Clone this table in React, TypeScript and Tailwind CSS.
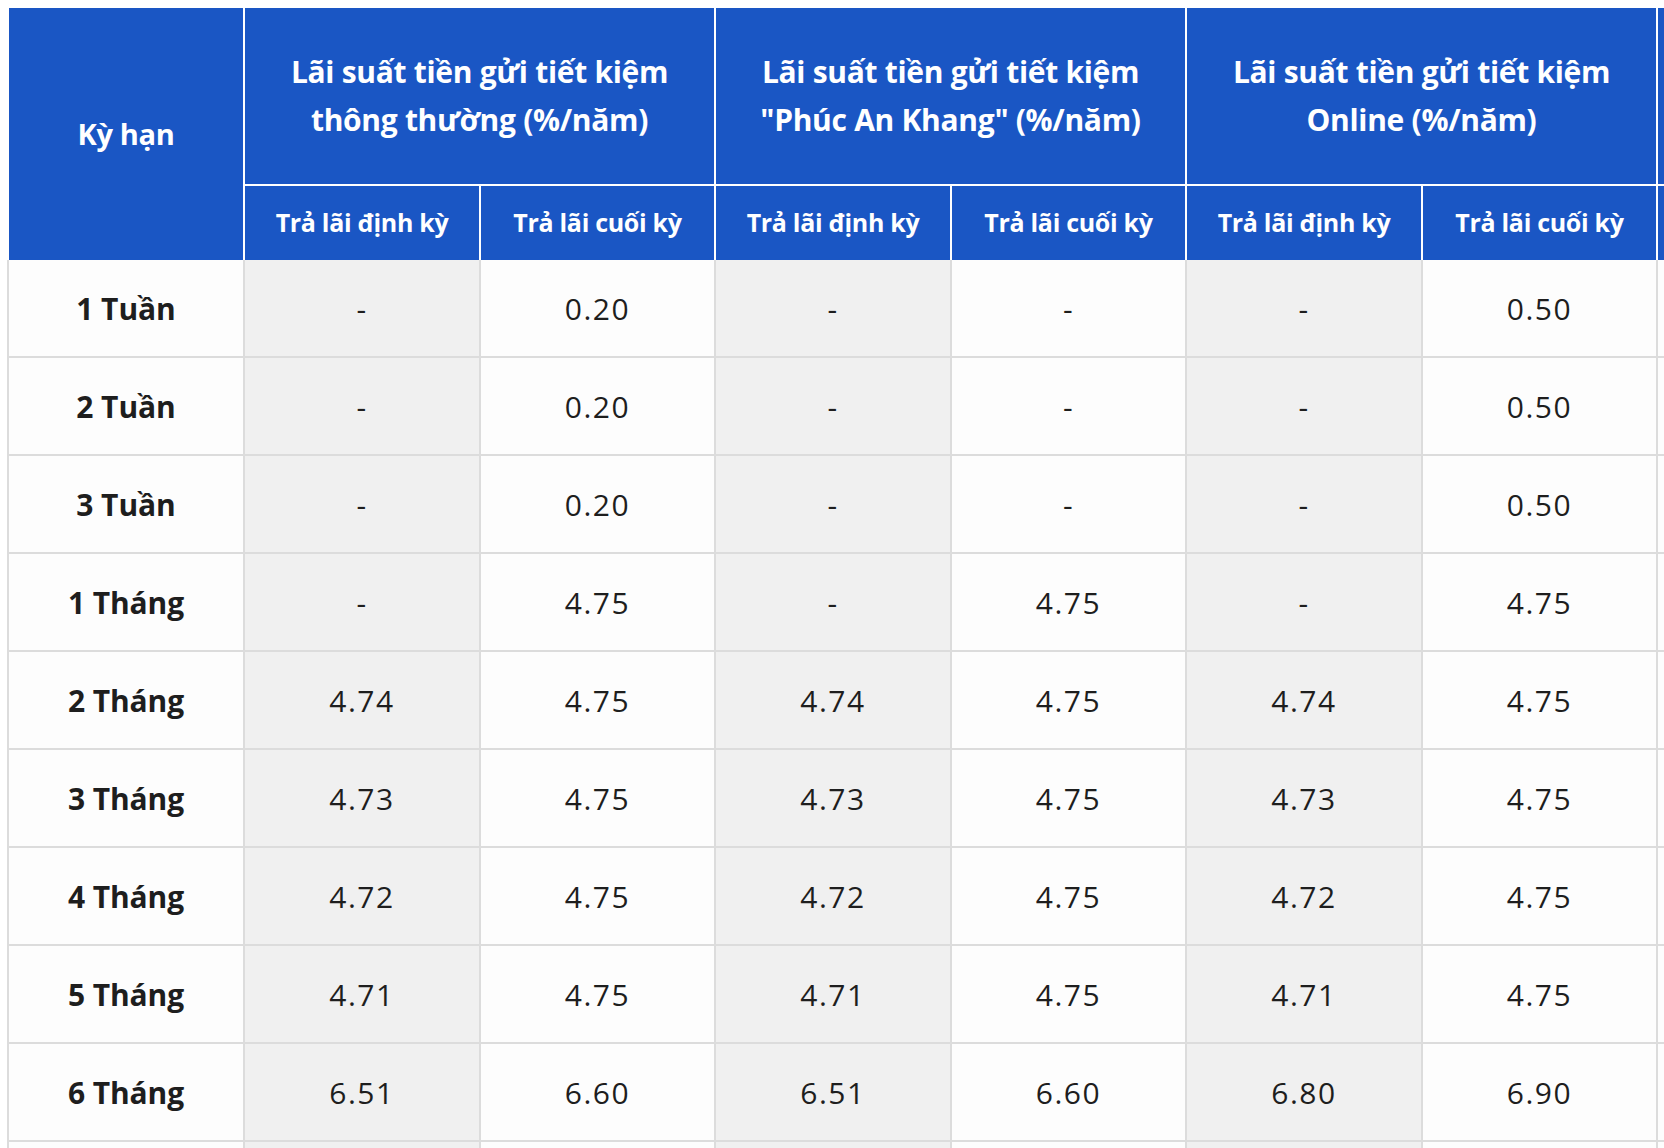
import React from "react";

const rows: string[][] = [
  ["1 Tuần", "-", "0.20", "-", "-", "-", "0.50"],
  ["2 Tuần", "-", "0.20", "-", "-", "-", "0.50"],
  ["3 Tuần", "-", "0.20", "-", "-", "-", "0.50"],
  ["1 Tháng", "-", "4.75", "-", "4.75", "-", "4.75"],
  ["2 Tháng", "4.74", "4.75", "4.74", "4.75", "4.74", "4.75"],
  ["3 Tháng", "4.73", "4.75", "4.73", "4.75", "4.73", "4.75"],
  ["4 Tháng", "4.72", "4.75", "4.72", "4.75", "4.72", "4.75"],
  ["5 Tháng", "4.71", "4.75", "4.71", "4.75", "4.71", "4.75"],
  ["6 Tháng", "6.51", "6.60", "6.51", "6.60", "6.80", "6.90"],
  ["", "", "", "", "", "", ""],
];

const groups: [string, string][] = [
  ["Lãi suất tiền gửi tiết kiệm", "thông thường (%/năm)"],
  ["Lãi suất tiền gửi tiết kiệm", "\"Phúc An Khang\" (%/năm)"],
  ["Lãi suất tiền gửi tiết kiệm", "Online (%/năm)"],
];

const font = { fontFamily: "'Open Sans', 'Noto Sans', sans-serif" };

export default function App() {
  return (
    <div className="w-[1664px] h-[1148px] overflow-hidden bg-white pl-[7px] pt-[8px]" style={font}>
      <div className="grid w-max grid-cols-[238px_236px_235px_236px_235px_236px_235px_236px] grid-rows-[178px_74px_repeat(10,98px)]">
        {/* Header */}
        <div className="row-span-2 flex items-center justify-center border-l-2 border-r-2 border-white bg-[#1a56c4] text-[29px] font-bold tracking-[-0.3px] text-white">
          Kỳ hạn
        </div>
        {groups.map((g, i) => (
          <div
            key={i}
            className="col-span-2 flex flex-col items-center justify-center border-r-2 border-b-2 border-white bg-[#1a56c4] text-[30px] font-bold leading-[48px] tracking-[-0.3px] text-white"
          >
            <span>{g[0]}</span>
            <span>{g[1]}</span>
          </div>
        ))}
        <div className="border-b-2 border-white bg-[#1a56c4]" />
        {[0, 1, 2].map((i) => (
          <React.Fragment key={i}>
            <div className="flex items-center justify-center border-r-2 border-white bg-[#1a56c4] text-[25px] font-bold tracking-[-0.3px] text-white">
              Trả lãi định kỳ
            </div>
            <div className="flex items-center justify-center border-r-2 border-white bg-[#1a56c4] text-[25px] font-bold tracking-[-0.3px] text-white">
              Trả lãi cuối kỳ
            </div>
          </React.Fragment>
        ))}
        <div className="bg-[#1a56c4]" />
        {/* Body */}
        {rows.map((r, ri) => (
          <React.Fragment key={ri}>
            <div className="flex items-center justify-center border-l-2 border-r-2 border-b-2 border-[#dcdcdc] bg-[#fdfdfd] text-[30px] font-bold tracking-[-0.1px] text-[#1e1e1e]">
              {r[0]}
            </div>
            {r.slice(1).map((v, ci) => (
              <div
                key={ci}
                className={
                  ci % 2 === 0
                    ? "flex items-center justify-center border-r-2 border-b-2 border-[#dcdcdc] bg-[#f0f0f0] text-[30px] tracking-[1.5px] text-[#1e1e1e]"
                    : "flex items-center justify-center border-r-2 border-b-2 border-[#dcdcdc] bg-[#fdfdfd] text-[30px] tracking-[1.5px] text-[#1e1e1e]"
                }
              >
                {v}
              </div>
            ))}
            <div className="border-b-2 border-[#dcdcdc] bg-[#fdfdfd]" />
          </React.Fragment>
        ))}
      </div>
    </div>
  );
}
